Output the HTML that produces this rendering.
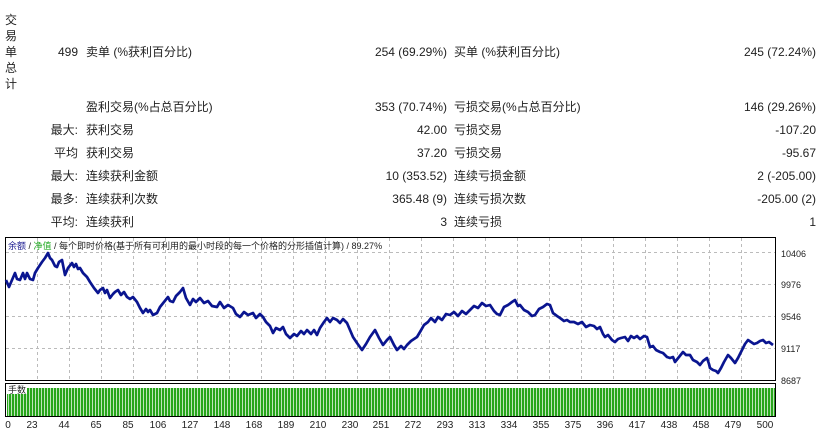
<!DOCTYPE html>
<html><head><meta charset="utf-8"><style>
body{margin:0;width:823px;height:437px;background:#fff;position:relative;overflow:hidden;font-family:"Liberation Sans","Noto Sans CJK SC",sans-serif;font-size:12px;color:#222}
.t{position:absolute;white-space:nowrap;line-height:14px}
.r{text-align:right}
.v{position:absolute;left:5px;width:12px;font-size:12px;line-height:16px}
</style></head><body>
<div class="v" style="top:12px">交<br>易<br>单<br>总<br>计</div>

<div class="t r" style="right:745px;top:45px">499</div>
<div class="t" style="left:86px;top:45px">卖单 (%获利百分比)</div>
<div class="t r" style="right:376px;top:45px">254 (69.29%)</div>
<div class="t" style="left:454px;top:45px">买单 (%获利百分比)</div>
<div class="t r" style="right:7px;top:45px">245 (72.24%)</div>

<div class="t" style="left:86px;top:100px">盈利交易(%占总百分比)</div>
<div class="t r" style="right:376px;top:100px">353 (70.74%)</div>
<div class="t" style="left:454px;top:100px">亏损交易(%占总百分比)</div>
<div class="t r" style="right:7px;top:100px">146 (29.26%)</div>

<div class="t r" style="right:745px;top:123px">最大:</div>
<div class="t" style="left:86px;top:123px">获利交易</div>
<div class="t r" style="right:376px;top:123px">42.00</div>
<div class="t" style="left:454px;top:123px">亏损交易</div>
<div class="t r" style="right:7px;top:123px">-107.20</div>

<div class="t r" style="right:745px;top:146px">平均</div>
<div class="t" style="left:86px;top:146px">获利交易</div>
<div class="t r" style="right:376px;top:146px">37.20</div>
<div class="t" style="left:454px;top:146px">亏损交易</div>
<div class="t r" style="right:7px;top:146px">-95.67</div>

<div class="t r" style="right:745px;top:169px">最大:</div>
<div class="t" style="left:86px;top:169px">连续获利金额</div>
<div class="t r" style="right:376px;top:169px">10 (353.52)</div>
<div class="t" style="left:454px;top:169px">连续亏损金额</div>
<div class="t r" style="right:7px;top:169px">2 (-205.00)</div>

<div class="t r" style="right:745px;top:192px">最多:</div>
<div class="t" style="left:86px;top:192px">连续获利次数</div>
<div class="t r" style="right:376px;top:192px">365.48 (9)</div>
<div class="t" style="left:454px;top:192px">连续亏损次数</div>
<div class="t r" style="right:7px;top:192px">-205.00 (2)</div>

<div class="t r" style="right:745px;top:215px">平均:</div>
<div class="t" style="left:86px;top:215px">连续获利</div>
<div class="t r" style="right:376px;top:215px">3</div>
<div class="t" style="left:454px;top:215px">连续亏损</div>
<div class="t r" style="right:7px;top:215px">1</div>

<svg style="position:absolute;left:0;top:0" width="823" height="437" font-family="Liberation Sans,Noto Sans CJK SC,sans-serif">
<defs><pattern id="bars" x="0" y="0" width="3" height="40" patternUnits="userSpaceOnUse"><rect x="0" y="0" width="2.3" height="40" fill="#27a51a"/></pattern></defs>
<g stroke="#bbb" stroke-dasharray="3,3" stroke-width="1">
<line x1="6" y1="252.5" x2="775" y2="252.5"/><line x1="6" y1="284.5" x2="775" y2="284.5"/><line x1="6" y1="316.5" x2="775" y2="316.5"/><line x1="6" y1="348.5" x2="775" y2="348.5"/>
<line x1="37.5" y1="238" x2="37.5" y2="380"/><line x1="69.5" y1="238" x2="69.5" y2="380"/><line x1="101.5" y1="238" x2="101.5" y2="380"/><line x1="133.5" y1="238" x2="133.5" y2="380"/><line x1="165.5" y1="238" x2="165.5" y2="380"/><line x1="197.5" y1="238" x2="197.5" y2="380"/><line x1="229.5" y1="238" x2="229.5" y2="380"/><line x1="261.5" y1="238" x2="261.5" y2="380"/><line x1="293.5" y1="238" x2="293.5" y2="380"/><line x1="325.5" y1="238" x2="325.5" y2="380"/><line x1="357.5" y1="238" x2="357.5" y2="380"/><line x1="389.5" y1="238" x2="389.5" y2="380"/><line x1="421.5" y1="238" x2="421.5" y2="380"/><line x1="453.5" y1="238" x2="453.5" y2="380"/><line x1="485.5" y1="238" x2="485.5" y2="380"/><line x1="517.5" y1="238" x2="517.5" y2="380"/><line x1="549.5" y1="238" x2="549.5" y2="380"/><line x1="581.5" y1="238" x2="581.5" y2="380"/><line x1="613.5" y1="238" x2="613.5" y2="380"/><line x1="645.5" y1="238" x2="645.5" y2="380"/><line x1="677.5" y1="238" x2="677.5" y2="380"/><line x1="709.5" y1="238" x2="709.5" y2="380"/><line x1="741.5" y1="238" x2="741.5" y2="380"/>
</g>
<rect x="5.5" y="237.5" width="770" height="143" fill="none" stroke="#000"/>
<rect x="5.5" y="383.5" width="770" height="33" fill="none" stroke="#000"/>
<rect x="27" y="388" width="748" height="28" fill="url(#bars)"/>
<rect x="7" y="392" width="20" height="24" fill="url(#bars)"/>
<rect x="7" y="386" width="20" height="8" fill="#fff"/>
<text x="8" y="393" font-size="9" fill="#222">手数</text>
<text x="8" y="249" font-size="9"><tspan fill="#1a1a90">余额</tspan><tspan fill="#222"> / </tspan><tspan fill="#2a2">净值</tspan><tspan fill="#222"> / 每个即时价格(基于所有可利用的最小时段的每一个价格的分形插值计算) / 89.27%</tspan></text>
<polyline fill="none" stroke="#0a1590" stroke-width="2.7" stroke-linejoin="round" points="6,280 9,287 12,280 15,273 17,279 20,280 23,273 25,279 27,273 30,279 33,280 35,273 38,268 42,262 45,258 48,253 50,258 52,260 53,262 55,266 57,267 59,262 62,260 64,270 65,275 68,268 72,263 74,267 76,264 78,269 80,268 83,273 87,277 90,282 94,288 98,293 100,290 103,288 105,293 107,290 110,298 113,294 115,292 118,290 121,295 124,292 127,297 130,299 133,297 137,302 140,308 143,313 146,309 148,312 150,310 153,315 157,313 160,307 164,302 168,297 170,301 173,302 176,296 180,292 183,288 186,298 190,305 193,299 196,302 200,298 204,303 208,301 212,306 217,307 220,302 224,308 228,305 233,308 236,314 240,317 244,312 248,315 253,313 256,318 260,314 263,317 266,322 270,326 273,333 276,328 280,330 283,327 286,334 290,338 294,334 297,336 301,331 304,334 307,330 311,334 314,330 317,335 320,328 324,322 327,318 330,322 333,318 337,320 340,323 343,319 347,323 350,330 353,337 357,343 362,350 366,344 370,337 375,330 379,338 383,345 387,340 390,337 394,345 397,350 401,346 404,349 407,345 411,341 414,339 417,337 420,332 424,325 428,322 431,318 435,322 438,317 442,320 446,314 450,315 454,312 458,316 462,311 466,314 470,310 474,306 478,308 482,303 486,306 490,305 494,311 497,314 500,315 504,307 508,305 512,302 515,300 518,306 520,305 524,310 528,312 532,316 535,315 539,309 543,307 547,304 550,305 553,313 557,316 560,318 564,321 567,320 570,322 574,322 578,324 582,322 586,327 590,325 594,326 597,329 600,327 603,334 605,337 608,335 612,340 615,342 618,339 621,338 625,337 628,341 631,336 634,338 637,336 640,339 644,336 647,337 650,347 653,346 656,350 660,352 663,353 667,357 670,358 673,357 675,362 679,357 683,352 686,355 690,355 693,360 697,362 700,365 703,361 707,358 709,364 710,368 713,370 716,371 718,373 721,368 724,362 728,355 731,358 735,363 738,358 742,350 745,344 748,340 751,342 754,344 757,343 760,341 763,340 766,343 769,342 773,345"/>
<g font-size="9" fill="#222">
<text x="781" y="257">10406</text><text x="781" y="288">9976</text><text x="781" y="320">9546</text><text x="781" y="352">9117</text><text x="781" y="384">8687</text>
</g>
<g font-size="10" fill="#222" text-anchor="middle">
<text x="8" y="428">0</text><text x="32" y="428">23</text><text x="64" y="428">44</text><text x="96" y="428">65</text><text x="128" y="428">85</text><text x="158" y="428">106</text><text x="190" y="428">127</text><text x="222" y="428">148</text><text x="254" y="428">168</text><text x="286" y="428">189</text><text x="318" y="428">210</text><text x="350" y="428">230</text><text x="381" y="428">251</text><text x="413" y="428">272</text><text x="445" y="428">293</text><text x="477" y="428">313</text><text x="509" y="428">334</text><text x="541" y="428">355</text><text x="573" y="428">375</text><text x="605" y="428">396</text><text x="637" y="428">417</text><text x="669" y="428">438</text><text x="701" y="428">458</text><text x="733" y="428">479</text><text x="765" y="428">500</text>
</g>
</svg>
</body></html>
